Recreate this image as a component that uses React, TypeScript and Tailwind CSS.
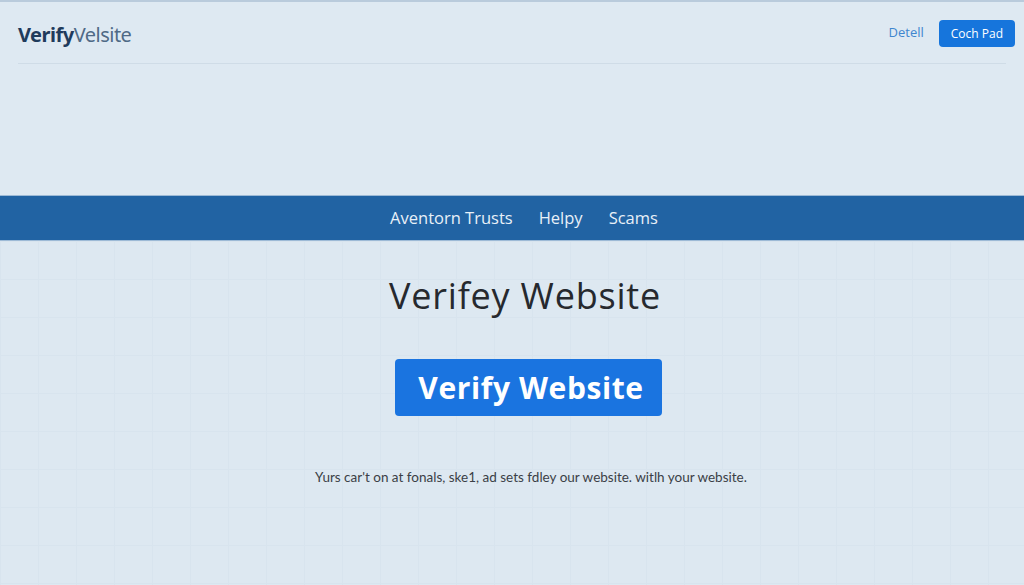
import React from 'react';

const navLinks = ['Aventorn Trusts', 'Helpy', 'Scams'];

export default function App() {
  return (
    <div className="flex h-[585px] w-[1024px] flex-col overflow-hidden bg-[#dde8f1] font-['Open_Sans',sans-serif]">
      <header className="h-[195px] border-t-2 border-[#b9cbdc] bg-[#dee9f2] px-[18px]">
        <div className="flex h-[62px] items-center justify-between border-b border-[#cfdce7]">
          <div className="pt-1 font-['Noto_Sans',sans-serif] text-[20px] tracking-[-0.5px]">
            <span className="font-bold text-[#1f3b5c]">Verify</span>
            <span className="text-[#4f6a86]">Velsite</span>
          </div>
          <div className="flex items-center gap-[15px]">
            <a className="text-[13px] text-[#3f86cf]">Detell</a>
            <button className="-mr-[9px] mt-[2px] h-[27px] rounded-[4px] bg-[#1675dc] px-[12px] text-[12px] text-white">
              Coch Pad
            </button>
          </div>
        </div>
      </header>

      <nav className="flex h-[46px] items-center justify-center gap-[26px] border-y border-[#9dbad6] bg-[#2163a3] pl-[24px] text-[16.5px] text-[#e8f0f8]">
        {navLinks.map((link) => (
          <a key={link}>{link}</a>
        ))}
      </nav>

      <main className="flex flex-1 flex-col items-center bg-[linear-gradient(to_right,#d8e4ee_1px,transparent_1px),linear-gradient(to_bottom,#d8e4ee_1px,transparent_1px)] bg-[size:38px_38px] pl-[26px] pt-[33px]">
        <h1 className="text-[36px] leading-[44px] tracking-[0.8px] text-[#26292e]">Verifey Website</h1>
        <button className="ml-[6px] mt-[41px] h-[57px] w-[267px] rounded-[4px] bg-[#1a74e0] pl-[6px] text-[30px] font-bold tracking-[0.6px] text-white">
          Verify Website
        </button>
        <p className="ml-[12px] mt-[51px] font-['Lato',sans-serif] text-[13.5px] text-[#3b3f46]">
          Yurs car't on at fonals, ske1, ad sets fdley our website. witlh your website.
        </p>
      </main>
    </div>
  );
}
